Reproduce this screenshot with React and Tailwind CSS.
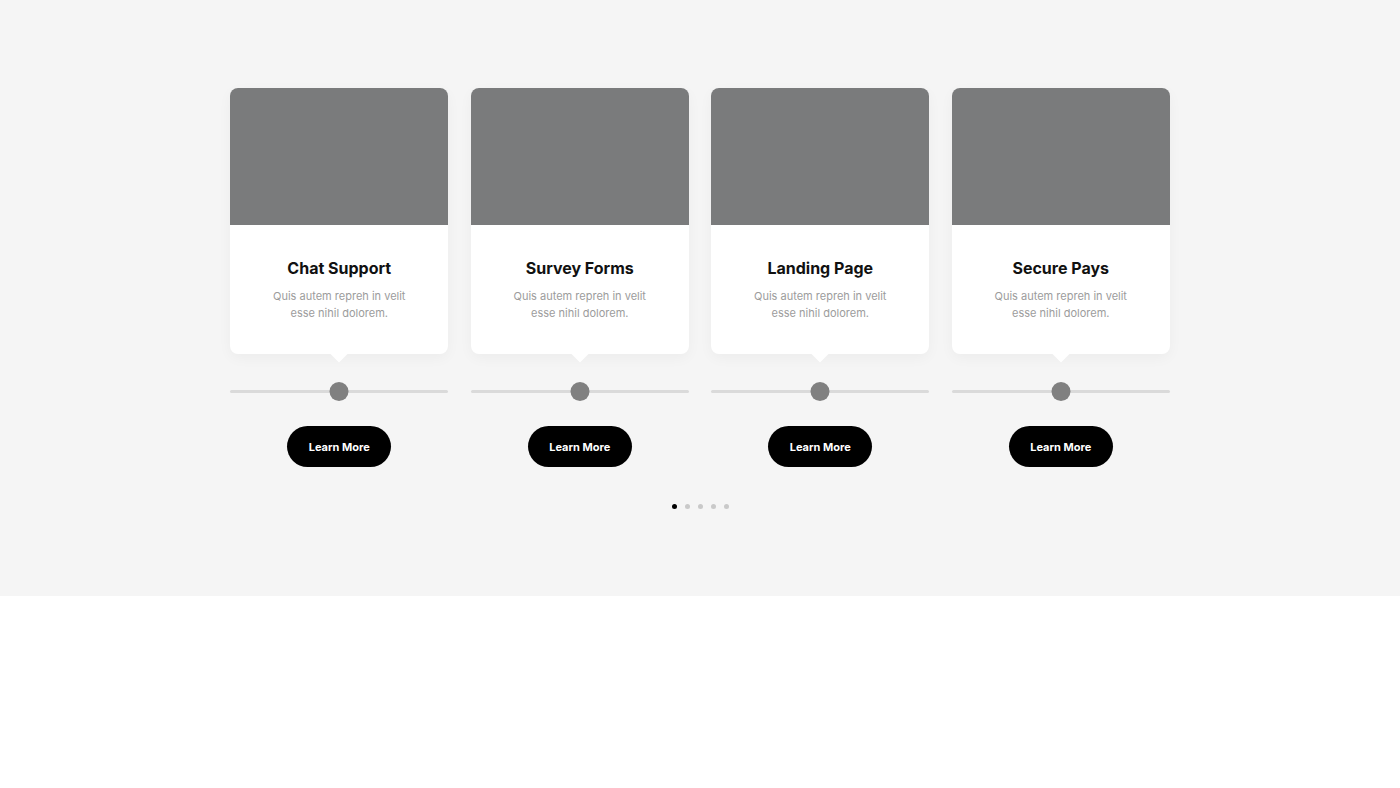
import React from 'react';

const cards = [
    { id: 1, title: 'Chat Support' },
    { id: 2, title: 'Survey Forms' },
    { id: 3, title: 'Landing Page' },
    { id: 4, title: 'Secure Pays' },
];

const FeatureCard = ({ title }) => {
    return (
        <div className="flex w-[218px] flex-col items-center">
            <div className="relative w-full rounded-lg bg-white shadow-[0_4px_14px_rgba(0,0,0,0.04)]">
                <div className="h-[137px] w-full rounded-t-lg bg-[#7a7b7c]" />
                <div className="h-[129px] px-4 pt-[32px] text-center">
                    <h3 className="text-[16px] font-bold leading-[22px] text-[#111]">{title}</h3>
                    <p className="mx-auto mt-[9px] w-[140px] text-[11px] leading-[17px] text-[#9c9c9c]">
                        Quis autem repreh in velit esse nihil dolorem.
                    </p>
                </div>
                <div className="absolute -bottom-[6px] left-1/2 h-[12px] w-[12px] -translate-x-1/2 rotate-45 bg-white" />
            </div>

            <div className="relative mt-[28px] flex h-[19px] w-full items-center">
                <div className="h-[3px] w-full rounded-full bg-[#dadada]" />
                <div className="absolute left-1/2 top-0 h-[19px] w-[19px] -translate-x-1/2 rounded-full bg-[#808080]" />
            </div>

            <button className="mt-[25px] h-[41px] w-[104px] rounded-full bg-black pt-px text-[11px] font-bold text-white">
                Learn More
            </button>
        </div>
    );
};

const App = () => {
    return (
        <div className="min-h-screen bg-white" style={{ fontFamily: 'Inter, "Noto Sans", sans-serif' }}>
            <section className="flex h-[596px] flex-col items-center bg-[#f5f5f5] pt-[88px]">
                <div className="flex gap-[22.5px]">
                    {cards.map((card) => (
                        <FeatureCard key={card.id} title={card.title} />
                    ))}
                </div>

                <div className="mt-[37px] flex items-center gap-[8px]">
                    <span className="h-[5px] w-[5px] rounded-full bg-black" />
                    <span className="h-[5px] w-[5px] rounded-full bg-[#c9c9c9]" />
                    <span className="h-[5px] w-[5px] rounded-full bg-[#c9c9c9]" />
                    <span className="h-[5px] w-[5px] rounded-full bg-[#c9c9c9]" />
                    <span className="h-[5px] w-[5px] rounded-full bg-[#c9c9c9]" />
                </div>
            </section>
        </div>
    );
};

export default App;
